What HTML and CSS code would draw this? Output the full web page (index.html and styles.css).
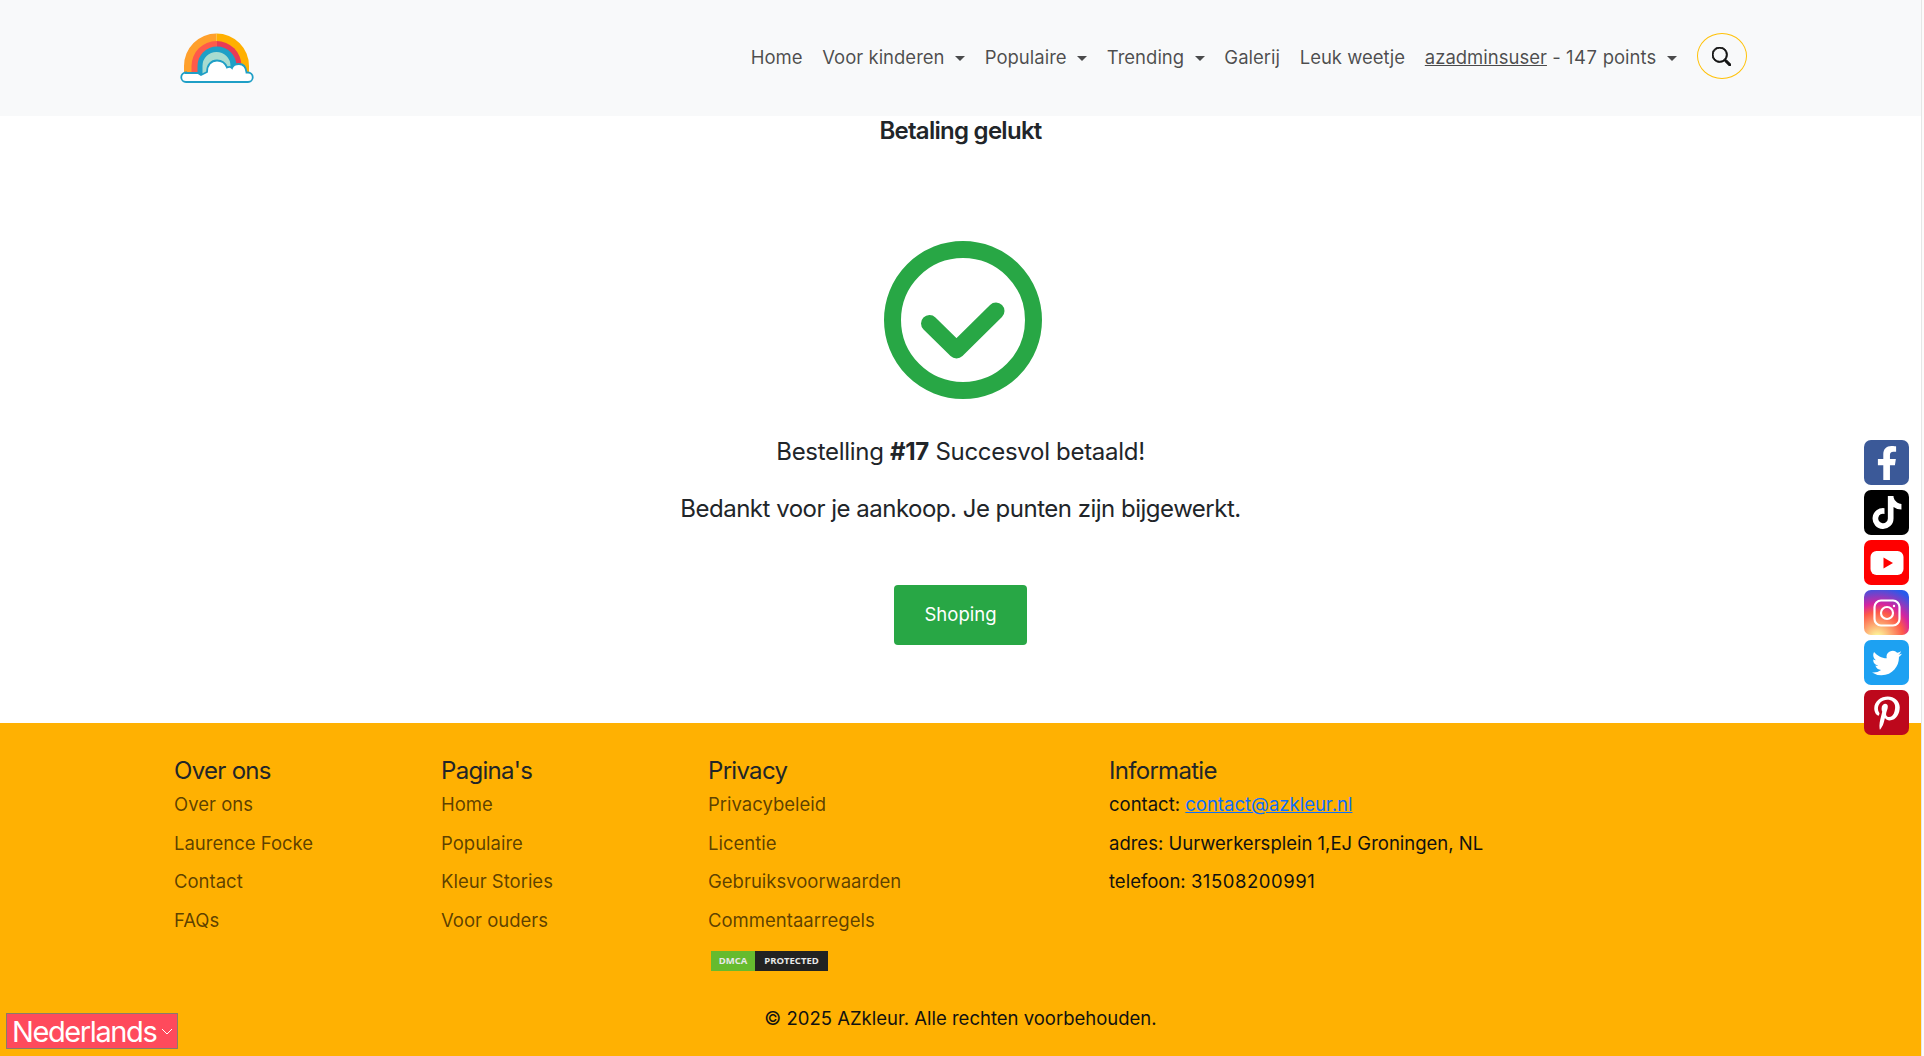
FILE: index.html
```html
<!DOCTYPE html>
<html lang="nl">
<head>
<meta charset="utf-8">
<title>Betaling gelukt</title>
<link rel="stylesheet" href="styles.css">
</head>
<body>
<div class="page">
  <header class="navbar">
    <div class="container nav-inner">
      <a class="logo" href="#" aria-label="AZkleur">
        <svg width="80" height="54" viewBox="18 10 80 54">
          <path d="M24 54V46a32.500 32.500 0 0 1 32.500-32.500V54z" fill="#ffa02c"/>
          <path d="M89 54V46a32.500 32.500 0 0 0-32.500-32.500V54z" fill="#ffb000"/>
          <path d="M31.500 54V46a25 25 0 0 1 25-25V54z" fill="#ff5a4a"/>
          <path d="M81.500 54V46a25 25 0 0 0-25-25V54z" fill="#e83b55"/>
          <path d="M37.500 54V46a19.500 19.500 0 0 1 39 0v8z" fill="#1f9fc6"/>
          <path d="M42.500 54V46a14 14 0 0 1 28 0v8z" fill="#a8dcd0"/>
          <path d="M26 53h12l3 2 6-3c0-7 4-11.500 10-11.500 5 0 8.500 3 10 7 2-1 4-.5 5 .5 1-3 4-4 7-4 4 0 7 3 7.500 8.500H88a4.700 4.700 0 0 1 0 9.500H26a4.700 4.700 0 0 1 0-9.500z" fill="#fff" stroke="#1f9fc6" stroke-width="1.800"/>
        </svg>
      </a>
      <nav class="nav-links">
        <a class="nav-link" href="#">Home</a>
        <a class="nav-link caret" href="#">Voor kinderen</a>
        <a class="nav-link caret" href="#">Populaire</a>
        <a class="nav-link caret" href="#">Trending</a>
        <a class="nav-link" href="#">Galerij</a>
        <a class="nav-link" href="#">Leuk weetje</a>
        <a class="nav-link caret" href="#"><span class="user">azadminsuser</span> - <span class="digits">147</span> points</a>
        <button class="search-btn" aria-label="Zoeken">
          <svg width="19" height="19" viewBox="0 0 16 16" fill="#111"><path d="M11.742 10.344a6.500 6.500 0 1 0-1.397 1.398h-.001c.03.04.062.078.098.115l3.850 3.850a1 1 0 0 0 1.415-1.414l-3.850-3.850a1.007 1.007 0 0 0-.115-.1zM12 6.500a5.500 5.500 0 1 1-11 0 5.500 5.500 0 0 1 11 0z" stroke="#111" stroke-width=".7"/></svg>
        </button>
      </nav>
    </div>
  </header>

  <main class="main">
    <h1 class="title">Betaling gelukt</h1>
    <svg class="check" width="160" height="160" viewBox="0 0 160 160" fill="none" stroke="#28a745">
      <circle cx="80" cy="80" r="70.500" stroke-width="17"/>
      <path d="M46.500 83.500 L73.500 110 L113 71" stroke-width="17" stroke-linecap="round" stroke-linejoin="round"/>
    </svg>
    <p class="msg first">Bestelling <strong>#17</strong> Succesvol betaald!</p>
    <p class="msg second">Bedankt voor je aankoop. Je punten zijn bijgewerkt.</p>
    <a class="shop-btn" href="#">Shoping</a>
  </main>

  <footer class="footer">
    <div class="container">
      <div class="foot-row">
        <section class="col">
          <h5>Over ons</h5>
          <a href="#">Over ons</a>
          <a href="#">Laurence Focke</a>
          <a href="#">Contact</a>
          <a href="#">FAQs</a>
        </section>
        <section class="col">
          <h5>Pagina's</h5>
          <a href="#">Home</a>
          <a href="#">Populaire</a>
          <a href="#">Kleur Stories</a>
          <a href="#">Voor ouders</a>
        </section>
        <section class="col wide">
          <h5>Privacy</h5>
          <a href="#">Privacybeleid</a>
          <a href="#">Licentie</a>
          <a href="#">Gebruiksvoorwaarden</a>
          <a href="#">Commentaarregels</a>
          <div class="dmca"><span class="dmca-l">DMCA</span><span class="dmca-r">PROTECTED</span></div>
        </section>
        <section class="col info">
          <h5>Informatie</h5>
          <p>contact: <a class="mail" href="#">contact@azkleur.nl</a></p>
          <p>adres: Uurwerkersplein 1,EJ Groningen, NL</p>
          <p>telefoon: <span class="digits">31508200991</span></p>
        </section>
      </div>
      <p class="copy">© 2025 AZkleur. Alle rechten voorbehouden.</p>
    </div>
  </footer>
</div>
<div class="rail"></div>

<aside class="social">
  <a class="soc fb" href="#" aria-label="Facebook"><svg width="30" height="34" viewBox="0 0 320 512" fill="#fff"><path d="M279.140 288l14.220-92.660h-88.910v-60.130c0-25.350 12.420-50.060 52.240-50.060h40.420V6.260S260.430 0 225.360 0c-73.220 0-121.080 44.380-121.080 124.720v70.620H22.890V288h81.390v224h100.170V288z"/></svg></a>
  <a class="soc tt" href="#" aria-label="TikTok"><svg width="30" height="33" viewBox="0 0 448 512" fill="#fff"><path d="M448 209.910a210.060 210.060 0 0 1-122.770-39.250V349.380A162.550 162.550 0 1 1 185 188.310V278.200a74.620 74.620 0 1 0 52.230 71.180V0h88a121.180 121.180 0 0 0 1.860 22.170A122.180 122.180 0 0 0 381 102.390a121.430 121.430 0 0 0 67 20.140z"/></svg></a>
  <a class="soc yt" href="#" aria-label="YouTube"><svg width="34" height="26" viewBox="0 0 34 26"><rect x="0.500" y="1" width="33" height="24" rx="6" fill="#fff"/><path d="M13.500 7.500v11l9.500-5.500z" fill="#f00"/></svg></a>
  <a class="soc ig" href="#" aria-label="Instagram"><svg width="28" height="28" viewBox="0 0 28 28" fill="none" stroke="#fff" stroke-width="2.200"><rect x="1.500" y="1.500" width="25" height="25" rx="6.500"/><circle cx="14" cy="14" r="6"/><circle cx="21" cy="7" r="1.200" fill="#fff" stroke="none"/></svg></a>
  <a class="soc tw" href="#" aria-label="Twitter"><svg width="30" height="30" viewBox="0 0 24 24" fill="#fff"><path d="M23.953 4.570a10 10 0 01-2.825.775 4.958 4.958 0 002.163-2.723c-.951.555-2.005.959-3.127 1.184a4.920 4.920 0 00-8.384 4.482C7.690 8.095 4.067 6.130 1.640 3.162a4.822 4.822 0 00-.666 2.475c0 1.710.870 3.213 2.188 4.096a4.904 4.904 0 01-2.228-.616v.060a4.923 4.923 0 003.946 4.827 4.996 4.996 0 01-2.212.085 4.936 4.936 0 004.604 3.417 9.867 9.867 0 01-6.102 2.105c-.390 0-.779-.023-1.170-.067a13.995 13.995 0 007.557 2.209c9.053 0 13.998-7.496 13.998-13.985 0-.210 0-.420-.015-.630A9.935 9.935 0 0024 4.590z"/></svg></a>
  <a class="soc pt" href="#" aria-label="Pinterest"><svg width="26" height="34" viewBox="0 0 384 512" fill="#fff"><path d="M204 6.500C101.400 6.500 0 74.900 0 185.600 0 256 39.600 296 63.600 296c9.900 0 15.600-27.600 15.600-35.400 0-9.300-23.700-29.100-23.700-67.800 0-80.400 61.200-137.400 140.400-137.400 68.100 0 118.500 38.700 118.500 109.800 0 53.100-21.300 152.700-90.300 152.700-24.900 0-46.200-18-46.200-43.800 0-37.800 26.400-74.400 26.400-113.400 0-66.200-93.900-54.200-93.900 25.800 0 16.800 2.100 35.400 9.600 50.700-13.800 59.400-42 147.900-42 209.100 0 18.900 2.700 37.500 4.500 56.400 3.400 3.800 1.700 3.400 6.900 1.500 50.400-69 48.600-82.500 71.400-172.800 12.300 23.400 44.100 36 69.300 36 106.200 0 153.900-103.500 153.900-196.800C384 71.300 298.200 6.500 204 6.500z"/></svg></a>
</aside>

<div class="lang">Nederlands<svg class="lang-arrow" width="12" height="7" viewBox="0 0 12 7" fill="none" stroke="#fff" stroke-width="1"><path d="M1 1l5 5 5-5"/></svg></div>
</body>
</html>
```

FILE: styles.css
```css
* { box-sizing: border-box; }
html, body { height: 100%; }
body {
  margin: 0;
  display: flex;
  overflow: hidden;
  background: #fff;
  color: #212529;
  font-family: Inter, "Liberation Sans", sans-serif;
  font-size: 18.5px;
  line-height: 1.5;
}
a { text-decoration: none; }
.page { flex: 1; min-width: 0; display: flex; flex-direction: column; }
.rail { width: 3px; background: #fbfbfb; border-left: 1px solid #e6e6e6; }
.container { width: 1600px; margin: 0 auto; padding: 0 12px; }
.digits { letter-spacing: .55px; }

.navbar { height: 116px; background: #f8f9fa; flex: none; }
.nav-inner { display: flex; justify-content: space-between; align-items: flex-start; padding-right: 14px; }
.logo { display: block; margin: 30px 0 0 5.5px; line-height: 0; }
.nav-links { display: flex; align-items: center; margin-top: 33px; }
.nav-link { color: rgba(0, 0, 0, .7); padding: 10px 9.85px 8px; white-space: nowrap; line-height: 27px; }
.user { text-decoration: underline; }
.caret::after {
  content: "";
  display: inline-block;
  margin-left: 10.5px;
  vertical-align: 3px;
  border-top: 5.5px solid;
  border-left: 5.5px solid transparent;
  border-right: 5.5px solid transparent;
}
.search-btn {
  width: 50px;
  height: 46px;
  margin-left: 10px;
  padding: 0;
  display: flex;
  align-items: center;
  justify-content: center;
  background: transparent;
  border: 1px solid #ffc107;
  border-radius: 50%;
}

.main { height: 607px; flex: none; display: flex; flex-direction: column; align-items: center; }
.title { margin: 0; font-size: 24px; font-weight: 600; line-height: 30px; letter-spacing: -.72px; }
.check { margin-top: 94px; margin-left: 5px; }
.msg { margin: 0 0 24px; font-size: 24px; line-height: 33px; }
.msg.first { margin-top: 35px; letter-spacing: -.3px; }
.msg.second { letter-spacing: -.5px; }
.shop-btn {
  margin-top: 36px;
  width: 133px;
  height: 60px;
  display: flex;
  align-items: center;
  justify-content: center;
  background: #28a745;
  color: #fff;
  border-radius: 4px;
}

.footer { flex: 1; background: #ffb102; padding-top: 30px; }
.foot-row { display: grid; grid-template-columns: 267px 267px 401px 1fr; margin-left: 1.5px; }
.col h5 { margin: 0 0 2px; font-size: 24px; font-weight: 400; line-height: 36px; color: #212529; letter-spacing: -.7px; }
.col > a { display: block; color: rgba(0, 0, 0, .65); line-height: 27px; margin-bottom: 11.6px; }
.col p { margin: 0 0 11.6px; line-height: 27px; color: #111; }
.mail { color: #0d6efd; text-decoration: underline; }
.dmca { display: flex; width: 117px; height: 20px; margin: 17px 0 0 3px; font-family: "Open Sans", sans-serif; font-size: 9.5px; font-weight: 700; line-height: 20px; text-align: center; color: #e8e8e8; }
.dmca-l { width: 44px; background: #66bb2e; }
.dmca-r { flex: 1; background: #222; }
.copy { margin: 34px 0 0; text-align: center; color: #111; }

.social { position: fixed; top: 440px; right: 15px; display: flex; flex-direction: column; gap: 5px; }
.soc { width: 45px; height: 45px; border-radius: 7px; display: flex; align-items: center; justify-content: center; }
.fb { background: #3b5998; }
.tt { background: #000; }
.yt { background: #f00; }
.ig { background: radial-gradient(circle at 30% 107%, #fdf497 0%, #fdf497 5%, #fd5949 45%, #d6249f 60%, #285aeb 90%); }
.tw { background: #1da1f2; }
.pt { background: #bd081c; }

.lang {
  position: fixed;
  left: 6px;
  bottom: 7px;
  width: 172px;
  height: 36px;
  padding-left: 5px;
  display: flex;
  align-items: center;
  gap: 5px;
  background: #ff4a5c;
  border: 1px solid #8a7a6a;
  color: #fff;
  font-size: 29px;
  line-height: 1;
  letter-spacing: -1.4px;
}
.lang-arrow { flex: none; }
```
